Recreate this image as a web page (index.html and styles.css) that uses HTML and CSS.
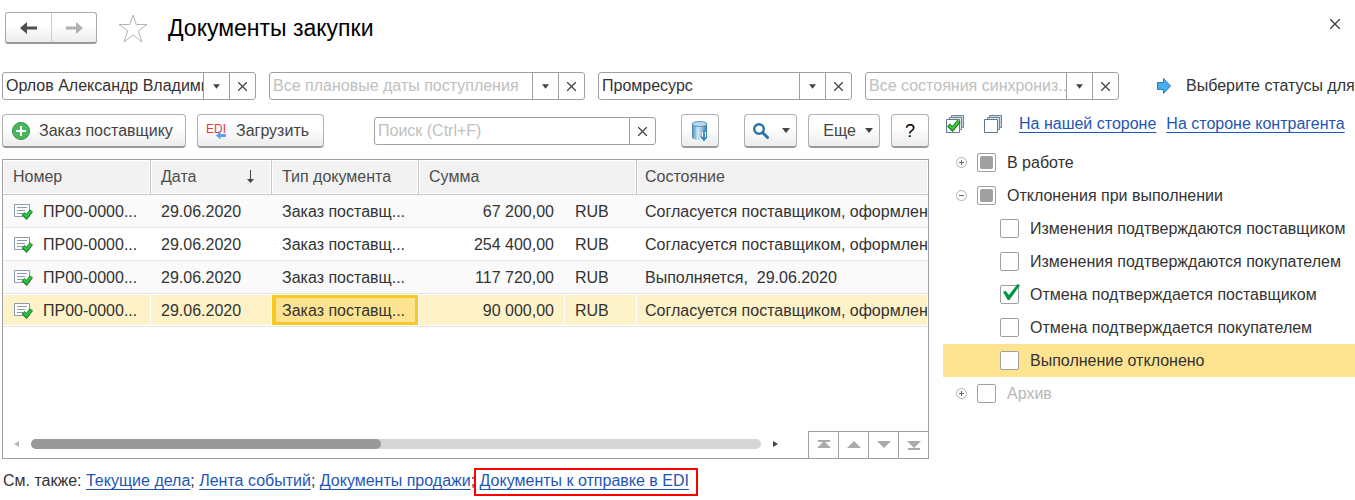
FILE: index.html
```html
<!DOCTYPE html>
<html lang="ru">
<head>
    <meta charset="UTF-8">
    <meta name="viewport" content="width=device-width, initial-scale=1.0">
    <title>Документы закупки</title>
    <link rel="stylesheet" href="styles.css">
</head>
<body>

<svg class="sprite" aria-hidden="true">
    <symbol id="caret" viewBox="0 0 8 5"><path d="M0 0h8L4 5z" fill="#444"/></symbol>
    <symbol id="cross" viewBox="0 0 10 10"><path d="M0 0l10 10M10 0l-10 10" stroke="#444" stroke-width="1.4" fill="none"/></symbol>
    <symbol id="doc" viewBox="0 0 20 17">
        <path d="M1.500 1.500h15v12h-15z" fill="#fff" stroke="#8c9cae"/>
        <path d="M4 4.500h10M4 7.500h8M4 10.500h6" stroke="#8c9cae"/>
        <path d="M10 10.500l3.500 3.500 5-6.500" fill="none" stroke="#16842a" stroke-width="4"/>
        <path d="M10.500 10.800l3 2.700 4.700-5.700" fill="none" stroke="#2fc845" stroke-width="2"/>
    </symbol>
    <symbol id="pages" viewBox="0 0 20 20">
        <path d="M6.500 1.500h12v12h-12z" fill="#c9d5da" stroke="#6e8797"/>
        <path d="M4.500 3.500h12v12h-12z" fill="#dde5e8" stroke="#6e8797"/>
        <path d="M1.500 5.500h13v13h-13z" fill="#fff" stroke="#5c7a90"/>
    </symbol>
</svg>

<header class="header">
    <div class="history">
        <button type="button" aria-label="Назад">
            <svg width="18" height="14" viewBox="0 0 18 14"><path d="M0 7l7-6v4.500h10v3H7V13z" fill="#4d4d4d"/></svg>
        </button>
        <button type="button" aria-label="Вперед">
            <svg width="18" height="14" viewBox="0 0 18 14"><path d="M18 7l-7-6v4.500H1v3h10V13z" fill="#b0b0b0"/></svg>
        </button>
    </div>
    <button type="button" class="star" aria-label="В избранное">
        <svg width="30" height="30" viewBox="0 0 30 30"><path d="M15 2l3.300 9.500h10.700l-8.700 6.300 3.700 11.200-9-7-9 7 3.700-11.200-8.700-6.300h10.700z" fill="#fff" stroke="#b0b6c0"/></svg>
    </button>
    <h1>Документы закупки</h1>
    <button type="button" class="close" aria-label="Закрыть"><svg width="10" height="10"><use href="#cross"/></svg></button>
</header>

<div class="filters">
    <div class="field">
        <input type="text" aria-label="Менеджер" value="Орлов Александр Владимирович">
        <button type="button" aria-label="Выбрать"><svg width="7" height="5"><use href="#caret"/></svg></button>
        <button type="button" aria-label="Очистить"><svg width="9" height="9"><use href="#cross"/></svg></button>
    </div>
    <div class="field field-wide">
        <input type="text" aria-label="Дата поступления" placeholder="Все плановые даты поступления">
        <button type="button" aria-label="Выбрать"><svg width="7" height="5"><use href="#caret"/></svg></button>
        <button type="button" aria-label="Очистить"><svg width="9" height="9"><use href="#cross"/></svg></button>
    </div>
    <div class="field">
        <input type="text" aria-label="Поставщик" value="Промресурс">
        <button type="button" aria-label="Выбрать"><svg width="7" height="5"><use href="#caret"/></svg></button>
        <button type="button" aria-label="Очистить"><svg width="9" height="9"><use href="#cross"/></svg></button>
    </div>
    <div class="field">
        <input type="text" aria-label="Состояние синхронизации" placeholder="Все состояния синхрониз...">
        <button type="button" aria-label="Выбрать"><svg width="7" height="5"><use href="#caret"/></svg></button>
        <button type="button" aria-label="Очистить"><svg width="9" height="9"><use href="#cross"/></svg></button>
    </div>
    <div class="hint">
        <svg width="16" height="18" viewBox="0 0 16 18"><path d="M1.500 5.500h6v-4l7 7.500-7 7.500v-4h-6z" fill="#45aef0" stroke="#2c7fb5"/></svg>
        <span>Выберите статусы для</span>
    </div>
</div>

<div class="content">
    <main>
        <div class="toolbar">
            <button type="button" class="btn btn-create">
                <svg width="20" height="20" viewBox="0 0 20 20"><circle cx="10" cy="10" r="8.500" fill="#48b85c" stroke="#2a9440"/><path d="M10 5v10M5 10h10" stroke="#fff" stroke-width="2"/></svg>
                Заказ поставщику
            </button>
            <button type="button" class="btn btn-load">
                <svg width="22" height="20" viewBox="0 0 22 20">
                    <text x="0" y="12" class="edi">EDI</text>
                    <path d="M10 14.500l4.500-4v2.500H20v3h-5.500v2.500z" fill="#5b9ff0"/>
                </svg>
                Загрузить
            </button>
            <div class="field search">
                <input type="text" aria-label="Поиск" placeholder="Поиск (Ctrl+F)">
                <button type="button" aria-label="Очистить"><svg width="9" height="9"><use href="#cross"/></svg></button>
            </div>
            <button type="button" class="btn btn-icon btn-base" aria-label="Загрузить из базы">
                <svg width="18" height="22" viewBox="0 0 18 22">
                    <defs><linearGradient id="cyl"><stop offset="0" stop-color="#4486b6"/><stop offset=".4" stop-color="#d3ebf8"/><stop offset="1" stop-color="#3878aa"/></linearGradient></defs>
                    <path d="M1 4v13c0 4 15 4 15 0V4z" fill="url(#cyl)"/>
                    <ellipse cx="8.500" cy="4" rx="7.500" ry="2.500" fill="#b5daf0" stroke="#5d91b5"/>
                    <path d="M13 12v8M10 17l3 3.500 3-3.500" stroke="#fff" stroke-width="4" fill="none"/>
                    <path d="M13 11v8.500M10 16.500l3 3.500 3-3.500" stroke="#2d83c4" stroke-width="1.800" fill="none"/>
                </svg>
            </button>
            <button type="button" class="btn btn-find" aria-label="Найти">
                <svg width="18" height="18" viewBox="0 0 18 18"><circle cx="7" cy="7" r="4.800" fill="none" stroke="#2a72a8" stroke-width="2.400"/><path d="M10.500 10.500l5 5" stroke="#2a72a8" stroke-width="3" stroke-linecap="round"/></svg>
                <svg width="8" height="5"><use href="#caret"/></svg>
            </button>
            <button type="button" class="btn btn-more">Еще <svg width="8" height="5"><use href="#caret"/></svg></button>
            <button type="button" class="btn btn-icon btn-help">?</button>
        </div>

        <div class="list">
            <table>
                <colgroup>
                    <col class="col-number"><col class="col-date"><col class="col-type"><col class="col-sum"><col class="col-currency"><col>
                </colgroup>
                <thead>
                    <tr>
                        <th>Номер</th>
                        <th><div class="sorted">Дата <svg width="9" height="14" viewBox="0 0 9 14"><path d="M4.500 0v12" stroke="#444"/><path d="M1 9l3.500 4L8 9z" fill="#444"/></svg></div></th>
                        <th>Тип документа</th>
                        <th colspan="2">Сумма</th>
                        <th>Состояние</th>
                    </tr>
                </thead>
                <tbody>
                    <tr>
                        <td><div class="number"><svg width="20" height="17"><use href="#doc"/></svg>ПР00-0000...</div></td>
                        <td>29.06.2020</td>
                        <td>Заказ поставщ...</td>
                        <td class="sum">67 200,00</td>
                        <td>RUB</td>
                        <td>Согласуется поставщиком, оформлен по заказу</td>
                    </tr>
                    <tr>
                        <td><div class="number"><svg width="20" height="17"><use href="#doc"/></svg>ПР00-0000...</div></td>
                        <td>29.06.2020</td>
                        <td>Заказ поставщ...</td>
                        <td class="sum">254 400,00</td>
                        <td>RUB</td>
                        <td>Согласуется поставщиком, оформлен по заказу</td>
                    </tr>
                    <tr>
                        <td><div class="number"><svg width="20" height="17"><use href="#doc"/></svg>ПР00-0000...</div></td>
                        <td>29.06.2020</td>
                        <td>Заказ поставщ...</td>
                        <td class="sum">117 720,00</td>
                        <td>RUB</td>
                        <td>Выполняется,&nbsp; 29.06.2020</td>
                    </tr>
                    <tr class="selected">
                        <td><div class="number"><svg width="20" height="17"><use href="#doc"/></svg>ПР00-0000...</div></td>
                        <td>29.06.2020</td>
                        <td class="current">Заказ поставщ...</td>
                        <td class="sum">90 000,00</td>
                        <td>RUB</td>
                        <td>Согласуется поставщиком, оформлен по заказу</td>
                    </tr>
                </tbody>
            </table>
            <div class="list-footer">
                <div class="scroll">
                    <svg width="5" height="6" viewBox="0 0 5 6"><path d="M5 0v6L0 3z" fill="#b5b5b5"/></svg>
                    <div class="track"><div class="thumb"></div></div>
                    <svg width="5" height="6" viewBox="0 0 5 6"><path d="M0 0v6l5-3z" fill="#444"/></svg>
                </div>
                <div class="pager">
                    <button type="button" aria-label="В начало"><svg width="14" height="10" viewBox="0 0 14 10"><path d="M1 1h12" stroke="#aaa" stroke-width="2"/><path d="M7 1l7 7H0z" fill="#aaa"/></svg></button>
                    <button type="button" aria-label="Вверх"><svg width="14" height="10" viewBox="0 0 14 10"><path d="M7 1l7 7H0z" fill="#aaa"/></svg></button>
                    <button type="button" aria-label="Вниз"><svg width="14" height="10" viewBox="0 0 14 10"><path d="M7 8l7-7H0z" fill="#aaa"/></svg></button>
                    <button type="button" aria-label="В конец"><svg width="14" height="10" viewBox="0 0 14 10"><path d="M1 9h12" stroke="#aaa" stroke-width="2"/><path d="M7 8l7-7H0z" fill="#aaa"/></svg></button>
                </div>
            </div>
        </div>

        <p class="see-also">См. также: <a href="#tasks">Текущие дела</a>; <a href="#events">Лента событий</a>; <a href="#sales">Документы продажи</a>; <a href="#edi" class="marked">Документы к отправке в EDI</a></p>
    </main>

    <aside>
        <div class="status-bar">
            <button type="button" aria-label="Установить все флажки"><svg width="20" height="20" viewBox="0 0 20 20"><use href="#pages"/><path d="M3.500 11l4 4 6.500-8" fill="none" stroke="#187a18" stroke-width="4"/><path d="M4.200 11.500l3.300 3L13.500 7.500" fill="none" stroke="#35d235" stroke-width="2"/></svg></button>
            <button type="button" aria-label="Снять все флажки"><svg width="20" height="20"><use href="#pages"/></svg></button>
            <div class="sides">
                <a href="#our">На нашей стороне</a>
                <a href="#partner">На стороне контрагента</a>
            </div>
        </div>
        <ul class="tree">
            <li>
                <button type="button" class="toggle" aria-label="Развернуть"><svg width="11" height="11" viewBox="0 0 11 11"><circle cx="5.500" cy="5.500" r="5" fill="#fff" stroke="#b0b0b0"/><path d="M3 5.500h5M5.500 3v5" stroke="#666"/></svg></button>
                <label><input type="checkbox" class="partial"> В работе</label>
            </li>
            <li>
                <button type="button" class="toggle" aria-label="Свернуть"><svg width="11" height="11" viewBox="0 0 11 11"><circle cx="5.500" cy="5.500" r="5" fill="#fff" stroke="#b0b0b0"/><path d="M3 5.500h5" stroke="#666"/></svg></button>
                <label><input type="checkbox" class="partial"> Отклонения при выполнении</label>
            </li>
            <li class="child"><label><input type="checkbox"> Изменения подтверждаются поставщиком</label></li>
            <li class="child"><label><input type="checkbox"> Изменения подтверждаются покупателем</label></li>
            <li class="child"><label><input type="checkbox" checked> Отмена подтверждается поставщиком</label></li>
            <li class="child"><label><input type="checkbox"> Отмена подтверждается покупателем</label></li>
            <li class="child active"><label><input type="checkbox"> Выполнение отклонено</label></li>
            <li class="archive">
                <button type="button" class="toggle" aria-label="Развернуть"><svg width="11" height="11" viewBox="0 0 11 11"><circle cx="5.500" cy="5.500" r="5" fill="#fff" stroke="#b0b0b0"/><path d="M3 5.500h5M5.500 3v5" stroke="#666"/></svg></button>
                <label><input type="checkbox"> Архив</label>
            </li>
        </ul>
    </aside>
</div>

</body>
</html>
```
FILE: styles.css
```css
* {
    box-sizing: border-box;
}
body {
    margin: 0;
    min-height: 100vh;
    font-family: "Liberation Sans", Arial, sans-serif;
    font-size: 16px;
    line-height: 20px;
    color: #333;
    background-color: #fff;
}
button, input {
    font: inherit;
    color: inherit;
    margin: 0;
}
button {
    display: flex;
    align-items: center;
    justify-content: center;
    padding: 0;
    border: 0;
    background: none;
    cursor: pointer;
}
svg {
    display: block;
    flex: none;
}
a {
    color: #1f56b5;
    text-decoration: underline;
    text-underline-offset: 3px;
    text-decoration-skip-ink: none;
}
.sprite {
    position: absolute;
    width: 0;
    height: 0;
}

/* header */
.header {
    display: flex;
    align-items: center;
    padding: 12px 15px 12px 5px;
}
.history {
    display: flex;
    height: 32px;
    border: 1px solid #aaa;
    border-bottom: 2px solid #999;
    border-radius: 3px;
    background: linear-gradient(#fff 40%, #ececec);
}
.history button {
    width: 45px;
}
.history button + button {
    border-left: 1px solid #ccc;
}
.star {
    margin-left: 21px;
}
h1 {
    margin: 0 auto 0 20px;
    font-size: 23px;
    line-height: 32px;
    font-weight: normal;
    color: #000;
}
.close {
    margin-bottom: 8px;
}

/* filters */
.filters {
    display: flex;
    gap: 13px;
    padding: 16px 0 14px 2px;
}
.field {
    display: flex;
    flex: none;
    width: 254px;
    height: 28px;
    border: 1px solid #a0a0a0;
    border-radius: 3px;
    background-color: #fff;
}
.field-wide {
    width: 316px;
}
.field input {
    flex: 1;
    min-width: 0;
    padding: 0 0 0 3px;
    border: 0;
    outline: 0;
    background: none;
}
.field input::placeholder {
    color: #c0c0c0;
    opacity: 1;
}
.field button {
    width: 26px;
    border-left: 1px solid #a0a0a0;
}
.hint {
    display: flex;
    align-items: center;
    gap: 14px;
    margin-left: 24px;
    white-space: nowrap;
}

.content {
    display: grid;
    grid-template-columns: minmax(0, 1fr) 412px;
    gap: 14px;
    padding-left: 2px;
}

/* toolbar */
.toolbar {
    display: flex;
    align-items: center;
    margin-bottom: 11px;
}
.btn {
    height: 34px;
    padding: 0 8px;
    border: 1px solid #b0b0b0;
    border-bottom: 2px solid #999;
    border-radius: 4px;
    background: linear-gradient(#fff 40%, #ececec);
    color: #444;
    white-space: nowrap;
}
.btn-create {
    width: 184px;
    gap: 8px;
    justify-content: flex-start;
}
.btn-load {
    width: 127px;
    gap: 8px;
    margin-left: 11px;
    justify-content: flex-start;
}
.edi {
    font-size: 12px;
    fill: #e83a3a;
}
.search {
    flex: 1;
    margin: 0 25px 0 50px;
}
.btn-icon {
    width: 38px;
}
.btn-find {
    width: 53px;
    gap: 12px;
    margin-left: 25px;
}
.btn-more {
    width: 72px;
    gap: 9px;
    padding-left: 16px;
    margin: 0 11px;
}
.btn-help {
    font-size: 18px;
    color: #000;
}

/* documents list */
.list {
    display: flex;
    flex-direction: column;
    min-height: 300px;
    border: 1px solid #a0a0a0;
}
table {
    width: 100%;
    table-layout: fixed;
    border-collapse: separate;
    border-spacing: 0;
}
.col-number {
    width: 148px;
}
.col-date {
    width: 121px;
}
.col-type {
    width: 147px;
}
.col-sum {
    width: 146px;
}
.col-currency {
    width: 72px;
}
th, td {
    padding: 0 0 0 10px;
    font-weight: normal;
    text-align: left;
    white-space: nowrap;
    overflow: hidden;
}
th {
    height: 35px;
    color: #4d4d4d;
    background-color: #f2f2f2;
    border-right: 1px solid #c8c8c8;
    border-bottom: 1px solid #c8c8c8;
    box-shadow: inset 0 0 0 1px #fff;
}
th:last-child {
    border-right: 0;
}
th:last-child, td:last-child {
    padding-left: 8px;
}
td {
    height: 33px;
    padding-top: 1px;
    border-bottom: 1px solid #e4e4e4;
}
tbody tr:nth-child(odd) {
    background-color: #fafafa;
}
.sorted {
    display: flex;
    align-items: center;
    justify-content: space-between;
    padding-right: 16px;
}
.number {
    display: flex;
    align-items: center;
    gap: 10px;
}
.sum {
    padding: 1px 11px 0 0;
    text-align: right;
}
.selected td {
    background-color: #fef2c8;
    box-shadow: inset -1px 0 #fff, inset 0 1px #fff, inset 0 -1px #fff;
}
.selected .current {
    background-color: #fee490;
    box-shadow: inset -1px 0 #fff, inset 0 1px #fff, inset 0 -1px #fff, inset 0 0 0 4px #fac81e;
}
.list-footer {
    display: flex;
    margin-top: auto;
}
.scroll {
    display: flex;
    flex: 1;
    align-items: center;
    gap: 12px;
    padding: 0 30px 2px 11px;
}
.track {
    flex: 1;
    height: 10px;
    border-radius: 5px;
    background-color: #d6d6d6;
}
.thumb {
    width: 48%;
    height: 10px;
    border-radius: 5px;
    background-color: #999;
}
.pager {
    display: flex;
    border-top: 1px solid #a0a0a0;
}
.pager button {
    width: 30px;
    height: 26px;
    border-left: 1px solid #a0a0a0;
}
.see-also {
    margin: 0;
    padding: 12px 0 8px 1px;
    white-space: nowrap;
}
.marked {
    position: relative;
}
.marked::after {
    content: "";
    position: absolute;
    inset: -4px -9px -7px -6px;
    border: 2px solid #f00;
}

/* statuses */
.status-bar {
    display: flex;
    align-items: center;
    gap: 18px;
    height: 20px;
    margin-bottom: 12px;
    padding-left: 2px;
    white-space: nowrap;
}
.sides {
    display: flex;
    gap: 10px;
    margin-left: -2px;
}
.tree {
    margin: 0;
    padding: 0;
    list-style: none;
}
.tree li {
    display: flex;
    align-items: center;
    gap: 10px;
    height: 33px;
    padding-left: 13px;
    white-space: nowrap;
}
.tree .child {
    padding-left: 57px;
}
.tree .active {
    background-color: #fee490;
}
.archive label {
    color: #b8b8b8;
}
label {
    display: flex;
    align-items: center;
    gap: 11px;
}
input[type="checkbox"] {
    appearance: none;
    position: relative;
    width: 19px;
    height: 19px;
    border: 1px solid #a0a0a0;
    border-radius: 2px;
    background-color: #fff;
}
.partial::after {
    content: "";
    position: absolute;
    inset: 2px;
    border-radius: 2px;
    background-color: #a0a0a0;
}
input:checked::after {
    content: "";
    position: absolute;
    top: -2px;
    left: 2px;
    width: 17px;
    height: 16px;
    background-color: #009646;
    clip-path: polygon(0 50%, 15% 42%, 34% 68%, 86% 0, 100% 8%, 38% 100%, 28% 100%);
}
```
